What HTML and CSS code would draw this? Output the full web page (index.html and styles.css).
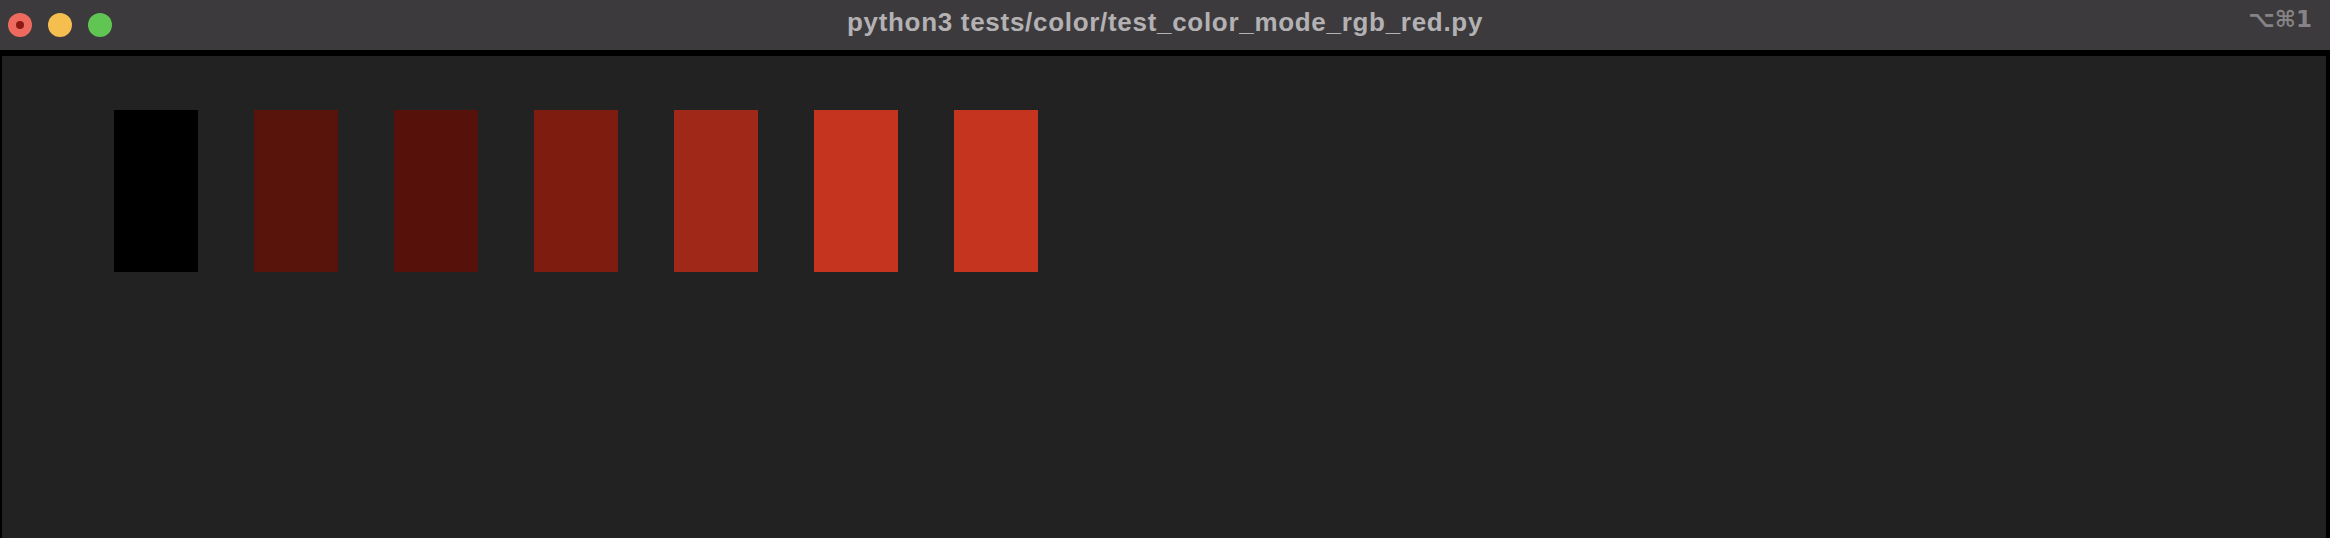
FILE: index.html
```html
<!DOCTYPE html>
<html>
<head>
<meta charset="utf-8">
<link rel="stylesheet" href="styles.css">
</head>
<body>
<div class="window">
  <div class="titlebar">
    <div class="lights">
      <span class="light red"><span class="dot"></span></span>
      <span class="light yellow"></span>
      <span class="light green"></span>
    </div>
    <div class="title">python3 tests/color/test_color_mode_rgb_red.py</div>
    <div class="shortcut">⌥⌘1</div>
  </div>
  <div class="content">
    <div class="swatches">
      <div class="swatch s0"></div>
      <div class="swatch s1"></div>
      <div class="swatch s2"></div>
      <div class="swatch s3"></div>
      <div class="swatch s4"></div>
      <div class="swatch s5"></div>
      <div class="swatch s6"></div>
    </div>
  </div>
</div>
</body>
</html>
```

FILE: styles.css
```css
html, body {
  margin: 0;
  padding: 0;
  background: #222222;
  height: 100%;
}
.window {
  display: flex;
  flex-direction: column;
  height: 538px;
  width: 2330px;
  overflow: hidden;
}
.titlebar {
  height: 50px;
  flex: 0 0 50px;
  background: #3c3a3c;
  display: grid;
  grid-template-columns: 1fr auto 1fr;
  align-items: center;
}
.lights {
  display: flex;
  gap: 16px;
  padding-left: 8px;
  align-items: center;
}
.light {
  width: 24px;
  height: 24px;
  border-radius: 50%;
  display: flex;
  align-items: center;
  justify-content: center;
}
.red { background: #ee6a5f; }
.yellow { background: #f5bf4f; }
.green { background: #61c554; }
.dot {
  width: 8px;
  height: 8px;
  border-radius: 50%;
  background: #8c1a10;
}
.title {
  font-family: "Liberation Sans", Arial, sans-serif;
  font-weight: bold;
  font-size: 26px;
  letter-spacing: 0.7px;
  color: #b3b1b3;
  line-height: 30px;
  padding-bottom: 6px;
  white-space: nowrap;
}
.shortcut {
  justify-self: end;
  align-self: start;
  padding-top: 6px;
  padding-right: 18px;
  font-family: "DejaVu Sans", sans-serif;
  font-weight: bold;
  font-size: 23px;
  line-height: 26px;
  color: #858385;
}
.content {
  flex: 1;
  background: #222222;
  border-top: 6px solid #000;
  border-left: 2px solid #000;
  border-right: 4px solid #000;
  padding: 54px 112px;
}
.swatches {
  display: flex;
  gap: 56px;
}
.swatch {
  width: 84px;
  height: 162px;
}
.s0 { background: #000000; }
.s1 { background: #58130a; }
.s2 { background: #55110a; }
.s3 { background: #7d1c0f; }
.s4 { background: #a02818; }
.s5 { background: #c4341e; }
.s6 { background: #c4341e; }
```
